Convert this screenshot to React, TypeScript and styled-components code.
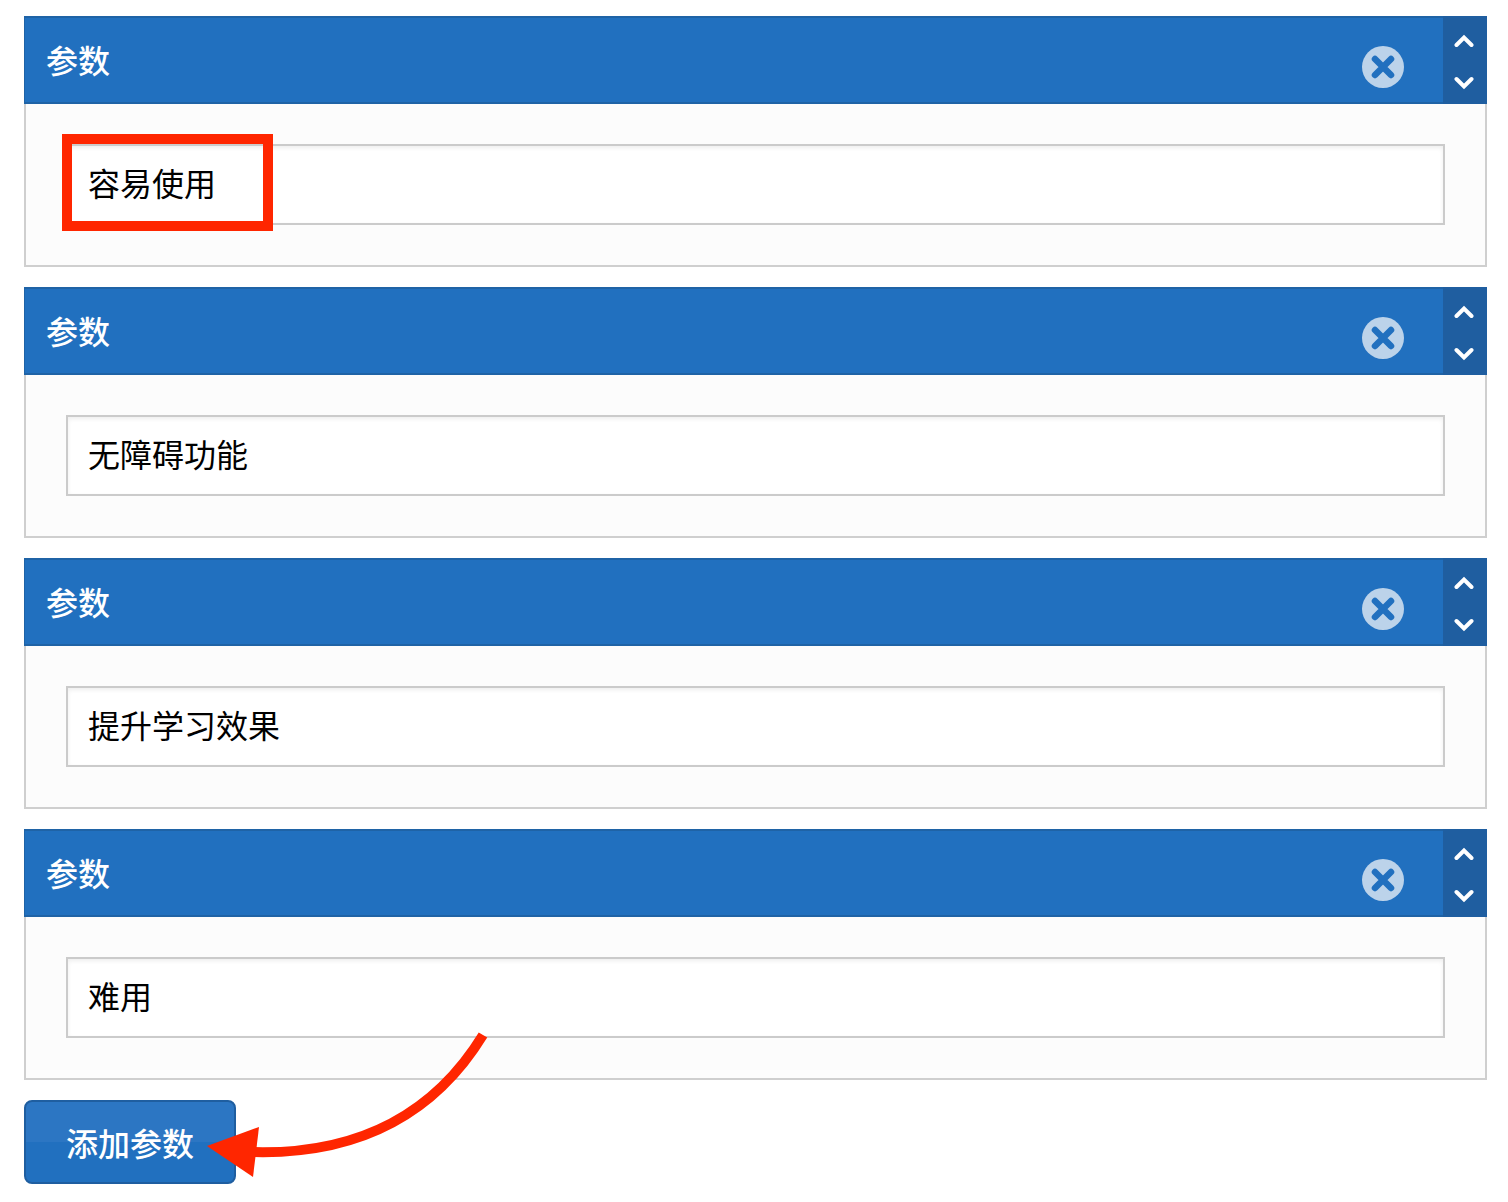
import { FC } from 'react';
import styled, { createGlobalStyle } from 'styled-components';

const GlobalStyle = createGlobalStyle`
  html, body {
    margin: 0;
    padding: 0;
    background: #fff;
  }
  body {
    font-family: "Liberation Sans", "Noto Sans CJK SC", sans-serif;
  }
`;

const Page = styled.div`
  position: relative;
  width: 1508px;
  height: 1202px;
  box-sizing: border-box;
  padding: 16px 21px 0 24px;
`;

const PanelList = styled.div`
  display: flex;
  flex-direction: column;
  gap: 20px;
`;

const Panel = styled.section`
  height: 251px;
  box-sizing: border-box;
  display: flex;
  flex-direction: column;
`;

const PanelHeader = styled.header`
  position: relative;
  flex: none;
  height: 88px;
  box-sizing: border-box;
  display: flex;
  align-items: center;
  padding: 0 0 0 21px;
  background: #2170bf;
  border-top: 2px solid #1f63a6;
  border-bottom: 2px solid #1f63a6;
  border-left: 1px solid #1f63a6;
`;

const PanelTitle = styled.h3`
  margin: 4px 0 0;
  flex: 1;
  font-size: 32px;
  font-weight: 500;
  line-height: 40px;
  color: #fff;
`;

const RemoveButton = styled.button`
  position: absolute;
  right: 82px;
  top: 27px;
  width: 44px;
  height: 44px;
  padding: 0;
  border: 0;
  background: none;
  display: flex;
`;

const SortControls = styled.div`
  align-self: stretch;
  margin: -2px 0;
  flex: none;
  width: 44px;
  background: #1f5ea0;
  display: flex;
  flex-direction: column;
  align-items: center;
  justify-content: space-between;
  padding: 18px 2px 14px 0;
  box-sizing: border-box;
`;

const PanelBody = styled.div`
  flex: 1;
  box-sizing: border-box;
  padding: 40px;
  background: #fcfcfc;
  border: 2px solid #cfcfcf;
  border-top: 0;
`;

const TextField = styled.input`
  display: block;
  width: 100%;
  height: 81px;
  box-sizing: border-box;
  padding: 0 20px 6px;
  font-family: inherit;
  font-size: 32px;
  color: #000;
  background: #fff;
  border: 2px solid #cbcbcb;
  box-shadow: inset 0 2px 4px rgba(0, 0, 0, 0.07);
  outline: none;
`;

const AddButton = styled.button`
  display: block;
  width: 212px;
  height: 84px;
  margin-top: 20px;
  padding: 0;
  font-family: inherit;
  font-size: 32px;
  font-weight: 500;
  color: #fff;
  border: 2px solid #1f5ea0;
  border-radius: 8px;
  background: linear-gradient(#2c76c3 0 50%, #2170bf 50% 100%);
`;

const Highlight = styled.div`
  position: absolute;
  left: 62px;
  top: 134px;
  width: 211px;
  height: 97px;
  box-sizing: border-box;
  border: 10px solid #ff2600;
  pointer-events: none;
`;

const ArrowOverlay = styled.svg`
  position: absolute;
  left: 0;
  top: 1020px;
  pointer-events: none;
`;

const RemoveIcon: FC = () => (
  <svg width="44" height="44" viewBox="0 0 44 44">
    <circle cx="22" cy="22" r="21" fill="#bcd3ea" />
    <path d="M14 14 L30 30 M30 14 L14 30" stroke="#2170bf" strokeWidth="6.5" strokeLinecap="round" />
  </svg>
);

const Chevron: FC<{ up?: boolean }> = ({ up }) => (
  <svg width="20" height="14" viewBox="0 0 20 14">
    <path
      d={up ? 'M2.5 11 L10 3.5 L17.5 11' : 'M2.5 3 L10 10.5 L17.5 3'}
      fill="none"
      stroke="#fff"
      strokeWidth="4"
      strokeLinecap="round"
      strokeLinejoin="miter"
    />
  </svg>
);

const params = ['容易使用', '无障碍功能', '提升学习效果', '难用'];

export default function App() {
  return (
    <Page>
      <GlobalStyle />
      <PanelList>
        {params.map((value) => (
          <Panel key={value}>
            <PanelHeader>
              <PanelTitle>参数</PanelTitle>
              <RemoveButton type="button">
                <RemoveIcon />
              </RemoveButton>
              <SortControls>
                <Chevron up />
                <Chevron />
              </SortControls>
            </PanelHeader>
            <PanelBody>
              <TextField defaultValue={value} readOnly />
            </PanelBody>
          </Panel>
        ))}
      </PanelList>
      <AddButton type="button">添加参数</AddButton>
      <Highlight />
      <ArrowOverlay width="500" height="182" viewBox="0 0 500 182">
        <path d="M 483 15 C 440 85, 370 136, 250 132" fill="none" stroke="#ff2600" strokeWidth="10" />
        <path d="M 207 126 L 259 107 L 253 157 Z" fill="#ff2600" />
      </ArrowOverlay>
    </Page>
  );
}
